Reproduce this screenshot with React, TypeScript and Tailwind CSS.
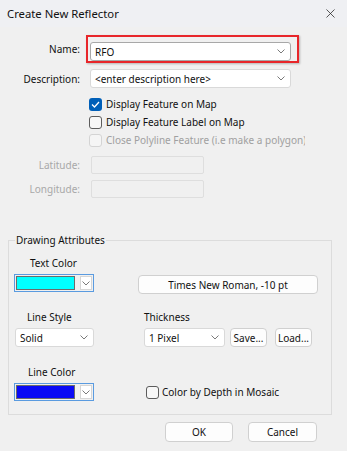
import { X } from "lucide-react";

function Chevron({ className = "" }: { className?: string }) {
  return (
    <svg width="8" height="5" viewBox="0 0 8 5" className={className}>
      <path d="M0.5 0.5 L4 4 L7.5 0.5" fill="none" stroke="#7a7a7a" strokeWidth="1" />
    </svg>
  );
}

function Combo({ value, width, border = "border-[#d9d9d9]" }: { value: string; width: string; border?: string }) {
  return (
    <div className={`${width} h-[19px] bg-white border ${border} rounded-[3px] flex items-center justify-between pl-[4px] pr-[5px]`}>
      <span>{value}</span>
      <Chevron />
    </div>
  );
}

function Check({ state }: { state: "on" | "off" | "disabled" }) {
  if (state === "on")
    return (
      <div className="shrink-0 w-[13px] h-[13px] rounded-[3px] bg-[#005fb8] flex items-center justify-center">
        <svg width="9" height="7" viewBox="0 0 9 7">
          <path d="M1 3.5 L3.5 6 L8 1" fill="none" stroke="white" strokeWidth="1.3" />
        </svg>
      </div>
    );
  return (
    <div
      className={`shrink-0 w-[13px] h-[13px] rounded-[3px] border ${
        state === "off" ? "border-[#5c5c5c] bg-[#f7f7f7]" : "border-[#d4d4d4] bg-[#f5f5f5]"
      }`}
    />
  );
}

function ColorCombo({ color }: { color: string }) {
  return (
    <div className="w-[80px] h-[18px] border border-[#5a9be0] p-[1px] flex items-center">
      <div className={`w-[60px] h-[14px] border border-[#6b6b6b] ${color}`} />
      <div className="ml-[5px] w-[12px] h-[14px] bg-white border border-[#d6d6d6] flex items-center justify-center">
        <Chevron />
      </div>
    </div>
  );
}

function Button({ label, className = "" }: { label: string; className?: string }) {
  return (
    <div className={`bg-[#fdfdfd] border border-[#d0d0d0] rounded-[4px] flex items-center justify-center ${className}`}>
      {label}
    </div>
  );
}

export default function App() {
  return (
    <div
      className="w-[347px] h-[451px] bg-[#f0f0f0] text-[#111] text-[10px] leading-[14px] flex flex-col overflow-hidden"
      style={{ fontFamily: '"Noto Sans", "Liberation Sans", Arial, sans-serif' }}
    >
      {/* title bar */}
      <div className="h-[27px] flex items-center justify-between pl-[7px] pr-[9px] bg-[#eff0f3]">
        <span className="text-[11.3px]">Create New Reflector</span>
        <X size={15} strokeWidth={1.2} className="text-[#222]" />
      </div>

      {/* name */}
      <div className="mt-[8px] flex items-center">
        <div className="w-[80px] text-right">Name:</div>
        <div className="ml-[6px] w-[213px] h-[28px] border-2 border-[#e8262a] shadow-[1px_1px_2px_rgba(0,0,0,0.25)] pt-[5px] pl-[2px] pr-[6px]">
          <Combo value="RFO" width="w-[201px]" border="border-[#a8a8a8]" />
        </div>
      </div>

      {/* description */}
      <div className="mt-[6px] flex items-center">
        <div className="w-[80px] text-right">Description:</div>
        <div className="ml-[10px]">
          <Combo value="<enter description here>" width="w-[201px]" />
        </div>
      </div>

      {/* checkboxes */}
      <div className="mt-[7px] ml-[89px] w-[216px] flex flex-col">
        <div className="h-[18px] flex items-center gap-[4px]">
          <Check state="on" />
          <span>Display Feature on Map</span>
        </div>
        <div className="h-[18px] flex items-center gap-[4px]">
          <Check state="off" />
          <span>Display Feature Label on Map</span>
        </div>
        <div className="h-[18px] flex items-center gap-[4px] text-[#a0a0a0] whitespace-nowrap overflow-hidden">
          <Check state="disabled" />
          <span>Close Polyline Feature (i.e make a polygon)</span>
        </div>
      </div>

      {/* lat / long */}
      <div className="mt-[7px] flex items-center text-[#a8a8a8]">
        <div className="w-[80px] text-right">Latitude:</div>
        <div className="ml-[11px] w-[113px] h-[18px] border border-[#dedede] rounded-[2px]" />
      </div>
      <div className="mt-[6px] flex items-center text-[#a8a8a8]">
        <div className="w-[80px] text-right">Longitude:</div>
        <div className="ml-[11px] w-[113px] h-[18px] border border-[#dedede] rounded-[2px]" />
      </div>

      {/* drawing attributes */}
      <fieldset className="mt-[35px] ml-[8px] w-[324px] border border-[#dcdcdc] pb-[13px]">
        <legend className="ml-[6px] px-[1px]">Drawing Attributes</legend>

        <div className="mt-[9px] ml-[21px]">Text Color</div>
        <div className="mt-[4px] flex items-start">
          <div className="ml-[5px]">
            <ColorCombo color="bg-[#00ffff]" />
          </div>
          <Button label="Times New Roman, -10 pt" className="ml-[44px] mt-[1px] w-[180px] h-[19px]" />
        </div>

        <div className="mt-[16px] flex">
          <div className="w-[135px] pl-[18px]">Line Style</div>
          <div>Thickness</div>
        </div>
        <div className="mt-[4px] flex items-center">
          <div className="ml-[6px]">
            <Combo value="Solid" width="w-[79px]" />
          </div>
          <div className="ml-[50px]">
            <Combo value="1 Pixel" width="w-[81px]" />
          </div>
          <Button label="Save..." className="ml-[5px] w-[37px] h-[19px]" />
          <Button label="Load..." className="ml-[8px] w-[37px] h-[19px]" />
        </div>

        <div className="mt-[18px] ml-[19px]">Line Color</div>
        <div className="mt-[4px] flex items-center">
          <div className="ml-[5px]">
            <ColorCombo color="bg-[#0a0af5]" />
          </div>
          <div className="ml-[52px] flex items-center gap-[3px]">
            <Check state="off" />
            <span>Color by Depth in Mosaic</span>
          </div>
        </div>
      </fieldset>

      {/* buttons */}
      <div className="mt-[7px] flex justify-end pr-[30px] gap-[15px]">
        <Button label="OK" className="w-[68px] h-[20px] border-[#3d87d6]" />
        <Button label="Cancel" className="w-[69px] h-[20px]" />
      </div>
    </div>
  );
}
